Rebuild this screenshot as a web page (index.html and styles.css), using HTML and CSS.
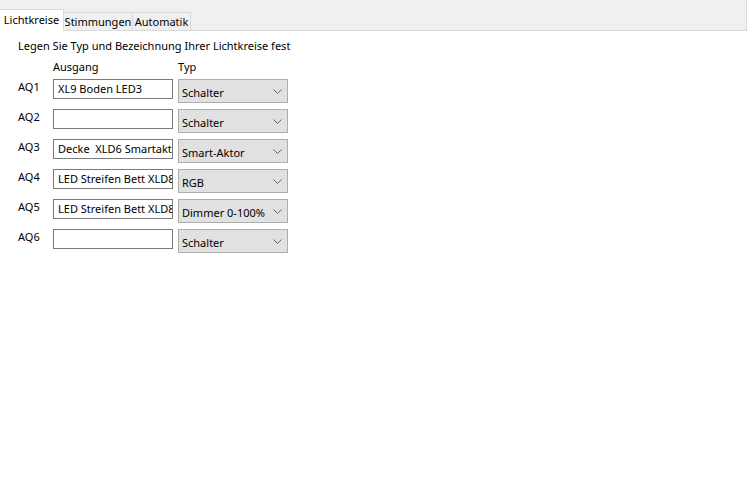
FILE: index.html
```html
<!DOCTYPE html>
<html lang="de">
<head>
  <meta charset="UTF-8" />
  <title>Lichtkreise</title>
  <link rel="stylesheet" href="styles.css">
</head>
<body>
  <div class="tabs">
    <div class="tab activo">Lichtkreise</div>
    <div class="tab stimmungen">Stimmungen</div>
    <div class="tab automatik">Automatik</div>
  </div>

  <div class="panel">
    <div class="titulo">Legen Sie Typ und Bezeichnung Ihrer Lichtkreise fest</div>
    <div class="cabecera">
      <span class="col-ausgang">Ausgang</span>
      <span>Typ</span>
    </div>

    <div class="fila">
      <span class="etiqueta">AQ1</span>
      <div class="campo">XL9 Boden LED3</div>
      <div class="auswahl"><span>Schalter</span><svg width="9" height="5" viewBox="0 0 9 5"><path d="M0.5 0.5 L4.5 4.5 L8.5 0.5" fill="none" stroke="#606060"/></svg></div>
    </div>
    <div class="fila">
      <span class="etiqueta">AQ2</span>
      <div class="campo"></div>
      <div class="auswahl"><span>Schalter</span><svg width="9" height="5" viewBox="0 0 9 5"><path d="M0.5 0.5 L4.5 4.5 L8.5 0.5" fill="none" stroke="#606060"/></svg></div>
    </div>
    <div class="fila">
      <span class="etiqueta">AQ3</span>
      <div class="campo">Decke&nbsp; XLD6 Smartaktor</div>
      <div class="auswahl"><span>Smart-Aktor</span><svg width="9" height="5" viewBox="0 0 9 5"><path d="M0.5 0.5 L4.5 4.5 L8.5 0.5" fill="none" stroke="#606060"/></svg></div>
    </div>
    <div class="fila">
      <span class="etiqueta">AQ4</span>
      <div class="campo">LED Streifen Bett XLD8</div>
      <div class="auswahl"><span>RGB</span><svg width="9" height="5" viewBox="0 0 9 5"><path d="M0.5 0.5 L4.5 4.5 L8.5 0.5" fill="none" stroke="#606060"/></svg></div>
    </div>
    <div class="fila">
      <span class="etiqueta">AQ5</span>
      <div class="campo">LED Streifen Bett XLD8</div>
      <div class="auswahl"><span>Dimmer 0-100%</span><svg width="9" height="5" viewBox="0 0 9 5"><path d="M0.5 0.5 L4.5 4.5 L8.5 0.5" fill="none" stroke="#606060"/></svg></div>
    </div>
    <div class="fila">
      <span class="etiqueta">AQ6</span>
      <div class="campo"></div>
      <div class="auswahl"><span>Schalter</span><svg width="9" height="5" viewBox="0 0 9 5"><path d="M0.5 0.5 L4.5 4.5 L8.5 0.5" fill="none" stroke="#606060"/></svg></div>
    </div>
  </div>
</body>
</html>
```

FILE: styles.css
```css
body {
  margin: 0;
  padding: 0;
  background: #ffffff;
  font-family: "Noto Sans", "Open Sans", sans-serif;
  font-size: 11px;
  color: #000;
}
.tabs {
  display: flex;
  align-items: flex-end;
  height: 30px;
  width: 746px;
  background: #f0f0f0;
  border-bottom: 1px solid #d9d9d9;
  border-right: 1px solid #d9d9d9;
}
.tab {
  box-sizing: border-box;
  height: 18px;
  line-height: 17px;
  text-align: center;
  border-top: 1px solid #d9d9d9;
  border-right: 1px solid #d9d9d9;
  background: #f0f0f0;
}
.tab.activo {
  width: 64px;
  height: 22px;
  line-height: 20px;
  margin-bottom: -1px;
  background: #ffffff;
}
.stimmungen {
  width: 69px;
}
.automatik {
  width: 58px;
}
.panel {
  padding: 6px 0 0 18px;
}
.titulo {
  height: 22px;
  line-height: 18px;
}
.cabecera {
  display: flex;
  padding-left: 35px;
  height: 20px;
  line-height: 16px;
}
.col-ausgang {
  width: 125px;
}
.fila {
  display: flex;
  align-items: flex-start;
  height: 30px;
}
.etiqueta {
  width: 35px;
  line-height: 16px;
}
.campo {
  width: 114px;
  height: 18px;
  padding-left: 4px;
  border: 1px solid #7a7a7a;
  line-height: 18px;
  overflow: hidden;
  white-space: nowrap;
  margin-right: 5px;
}
.auswahl {
  display: flex;
  align-items: center;
  justify-content: space-between;
  width: 100px;
  height: 20px;
  padding: 2px 5px 0 3px;
  background: #e1e1e1;
  border: 1px solid #adadad;
}
.auswahl svg {
  margin-top: -2px;
}
```
